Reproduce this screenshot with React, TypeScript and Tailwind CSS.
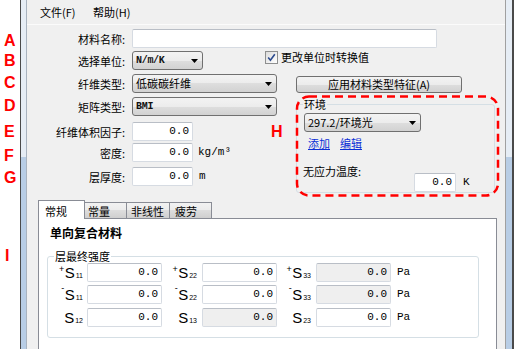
import React from "react";

function Arrow() {
  return (
    <svg width="7" height="4" viewBox="0 0 7 4" className="shrink-0">
      <polygon points="0,0 7,0 3.5,4" fill="#000" />
    </svg>
  );
}

function Combo({ w, text, mono }: { w: string; text: string; mono?: boolean }) {
  return (
    <div
      className={`${w} h-[19px] shrink-0 rounded-[3px] border border-[#707070] bg-[linear-gradient(#f3f3f3,#ececec_50%,#dedede_50%,#d2d2d2)] flex items-center justify-between pl-[3px] pr-[4px]`}
    >
      <span
        className={
          mono
            ? "font-['Liberation_Mono',monospace] font-bold text-[10px] leading-none tracking-[-0.3px] text-[#111]"
            : "text-[11px] leading-none"
        }
      >
        {text}
      </span>
      <Arrow />
    </div>
  );
}

function Field({ w, value, disabled }: { w: string; value?: string; disabled?: boolean }) {
  return (
    <div
      className={`${w} h-[19px] shrink-0 rounded-[2px] border border-[#d6dbe2] border-t-[#b9bec6] ${
        disabled ? "bg-[#efefef]" : "bg-white"
      } flex items-center justify-end pr-[3px]`}
    >
      {value ? (
        <span className="font-['Liberation_Mono',monospace] text-[11px] leading-none">{value}</span>
      ) : null}
    </div>
  );
}

function Label({ children }: { children: React.ReactNode }) {
  return <div className="w-[98px] mr-[7px] shrink-0 text-right text-[11px] leading-[14px]">{children}</div>;
}

function Unit({ children, cls }: { children: React.ReactNode; cls: string }) {
  return (
    <span className={`font-['Liberation_Mono',monospace] text-[11px] leading-none ${cls}`}>{children}</span>
  );
}

function SLabel({ sup, sub, w }: { sup?: string; sub: string; w: string }) {
  return (
    <div className={`${w} h-[19px] shrink-0 flex items-center justify-end font-['Liberation_Sans',Arial,sans-serif] pr-[1px]`}>
      {sup === "+" ? <span className="text-[9px] leading-[9px] self-start mt-[2px] mr-[0.5px]">+</span> : null}
      {sup === "-" ? <span className="text-[9px] leading-[9px] self-start -mt-[1px] mr-[0.5px]">-</span> : null}
      <span className="text-[15px] leading-none">S</span>
      <span className="text-[7px] leading-none self-end mb-[3px] ml-[1px]">{sub}</span>
    </div>
  );
}

function SRow({
  cells,
  className,
}: {
  cells: { sup?: string; sub: string; disabled?: boolean }[];
  className: string;
}) {
  return (
    <div className={`flex items-center h-[19px] ${className}`}>
      <SLabel sup={cells[0].sup} sub={cells[0].sub} w="w-[36px] mr-[3px]" />
      <Field w="w-[75px]" value="0.0" disabled={cells[0].disabled} />
      <SLabel sup={cells[1].sup} sub={cells[1].sub} w="w-[36px] mr-[4px]" />
      <Field w="w-[75px]" value="0.0" disabled={cells[1].disabled} />
      <SLabel sup={cells[2].sup} sub={cells[2].sub} w="w-[35px] mr-[4px]" />
      <Field w="w-[75px]" value="0.0" disabled={cells[2].disabled} />
      <Unit cls="ml-[6px]">Pa</Unit>
    </div>
  );
}

function Mark({ ch, cls }: { ch: string; cls: string }) {
  return (
    <div
      className={`absolute ${cls} text-[16px] leading-none font-bold text-[#ff0000] font-['Liberation_Sans',Arial,sans-serif]`}
    >
      {ch}
    </div>
  );
}

export default function App() {
  return (
    <div className="relative w-[517px] h-[349px] overflow-hidden bg-white flex text-black font-['Noto_Sans_CJK_SC','Noto_Sans',sans-serif]">
      {/* annotation gutter */}
      <div className="w-[20px] shrink-0 bg-white" />
      {/* left frame */}
      <div className="w-[1px] shrink-0 bg-[#4a4a4a]" />
      <div className="w-[5px] shrink-0 flex flex-col">
        <div className="h-[157px] bg-[#e6edf5]" />
        <div className="flex-1 bg-[#b8cde5]" />
      </div>
      <div className="w-[1px] shrink-0 bg-[#a9b3bf]" />

      {/* window */}
      <div className="w-[478px] shrink-0 bg-[#f0f0f0] flex flex-col text-[11px]">
        {/* menu */}
        <div className="h-[25px] shrink-0 border-b border-[#fbfbfb] flex items-center">
          <span className="ml-[13px] w-[53px] leading-[14px]">文件(F)</span>
          <span className="leading-[14px]">帮助(H)</span>
        </div>

        {/* row A */}
        <div className="mt-[4px] h-[19px] flex items-center shrink-0">
          <Label>材料名称:</Label>
          <Field w="w-[305px]" />
        </div>

        {/* row B */}
        <div className="mt-[3px] h-[19px] flex items-start shrink-0">
          <div className="h-[19px] flex items-center">
            <Label>选择单位:</Label>
          </div>
          <Combo w="w-[71px]" text="N/m/K" mono />
          <div className="ml-[62px] flex items-center">
            <div className="w-[13px] h-[13px] border border-[#8e8f8f] bg-[linear-gradient(135deg,#dcdcdc,#ffffff)] flex items-center justify-center">
              <svg width="11" height="11" viewBox="0 0 11 11">
                <path d="M2.2 5.6 L4.4 8.2 L8.8 2.2" fill="none" stroke="#2b4a8e" strokeWidth="1.6" />
              </svg>
            </div>
            <span className="ml-[3px] leading-[13px]">更改单位时转换值</span>
          </div>
        </div>

        {/* middle */}
        <div className="h-[130px] flex shrink-0">
          <div className="w-[269px] shrink-0 flex flex-col">
            <div className="mt-[4px] h-[19px] flex items-center">
              <Label>纤维类型:</Label>
              <Combo w="w-[145px]" text="低碳碳纤维" />
            </div>
            <div className="mt-[4px] h-[19px] flex items-center">
              <Label>矩阵类型:</Label>
              <Combo w="w-[145px]" text="BMI" mono />
            </div>
            <div className="mt-[6px] h-[19px] flex items-center">
              <Label>纤维体积因子:</Label>
              <Field w="w-[61px]" value="0.0" />
            </div>
            <div className="mt-[2px] h-[19px] flex items-center">
              <Label>密度:</Label>
              <Field w="w-[61px]" value="0.0" />
              <Unit cls="ml-[5px]">kg/m³</Unit>
            </div>
            <div className="mt-[5px] h-[19px] flex items-center">
              <Label>层厚度:</Label>
              <Field w="w-[61px]" value="0.0" />
              <Unit cls="ml-[6px]">m</Unit>
            </div>
          </div>

          <div className="flex flex-col">
            <div className="mt-[6px] w-[166px] h-[17px] rounded-[3px] border border-[#707070] bg-[linear-gradient(#f3f3f3,#ececec_50%,#dedede_50%,#d2d2d2)] flex items-center justify-center">
              <span className="leading-none">应用材料类型特征(A)</span>
            </div>
            <fieldset className="mt-[4px] m-0 p-0 w-[199px] min-w-0 rounded-[3px] border border-[#d5dfe5]">
              <legend className="ml-[6px] px-[1px] leading-[14px] text-[11px]">环境</legend>
              <div className="mt-[2px] ml-[7px]">
                <Combo w="w-[117px]" text="297.2/环境光" />
              </div>
              <div className="mt-[4px] ml-[11px] flex h-[14px] items-center">
                <span className="text-[#0b2fd6] underline leading-[14px]">添加</span>
                <span className="ml-[10px] text-[#0b2fd6] underline leading-[14px]">编辑</span>
              </div>
              <div className="mt-[14px] ml-[6px] flex items-start">
                <span className="w-[111px] leading-[14px]">无应力温度:</span>
                <div className="mt-[9px] flex items-center">
                  <Field w="w-[42px]" value="0.0" />
                  <Unit cls="ml-[7px]">K</Unit>
                </div>
              </div>
            </fieldset>
          </div>
        </div>

        {/* tabs */}
        <div className="ml-[11px] w-[459px] flex flex-col">
          <div className="h-[18px] flex items-end">
            <div className="relative z-10 w-[47px] h-[19px] -mb-[1px] bg-white border border-b-0 border-[#898c95] pl-[6px] pt-[3px] leading-[14px]">
              常规
            </div>
            <div className="w-[42px] h-[16px] border-t border-r border-[#898c95] bg-[linear-gradient(#f2f2f2,#ebebeb_50%,#dddddd_50%,#cfcfcf)] pl-[3px] pt-[1px] leading-[14px]">
              常量
            </div>
            <div className="w-[43px] h-[16px] border-t border-r border-[#898c95] bg-[linear-gradient(#f2f2f2,#ebebeb_50%,#dddddd_50%,#cfcfcf)] pl-[4px] pt-[1px] leading-[14px]">
              非线性
            </div>
            <div className="w-[42px] h-[16px] border-t border-r border-[#898c95] bg-[linear-gradient(#f2f2f2,#ebebeb_50%,#dddddd_50%,#cfcfcf)] pl-[5px] pt-[1px] leading-[14px]">
              疲劳
            </div>
          </div>
          <div className="h-[140px] bg-white border border-[#898c95] flex flex-col">
            <div className="mt-[7px] ml-[11px] text-[12px] font-bold leading-[14px]">单向复合材料</div>
            <fieldset className="mt-[10px] ml-[8px] m-0 p-0 w-[432px] min-w-0 rounded-[3px] border border-[#d5dfe5]">
              <legend className="ml-[6px] px-[1px] leading-[12px] text-[11px]">层最终强度</legend>
              <SRow
                className="mt-[1px]"
                cells={[
                  { sup: "+", sub: "11" },
                  { sup: "+", sub: "22" },
                  { sup: "+", sub: "33", disabled: true },
                ]}
              />
              <SRow
                className="mt-[3px]"
                cells={[
                  { sup: "-", sub: "11" },
                  { sup: "-", sub: "22" },
                  { sup: "-", sub: "33", disabled: true },
                ]}
              />
              <SRow
                className="mt-[4px] mb-[10px]"
                cells={[{ sub: "12" }, { sub: "13", disabled: true }, { sub: "23" }]}
              />
            </fieldset>
          </div>
        </div>
      </div>

      {/* right frame */}
      <div className="w-[1px] shrink-0 bg-[#a0a0a0]" />
      <div className="w-[6px] shrink-0 flex flex-col">
        <div className="h-[157px] bg-[#e6edf5]" />
        <div className="flex-1 bg-[#b8cde5]" />
      </div>
      <div className="w-[2px] shrink-0 bg-[#4a4a4a]" />
      <div className="flex-1 bg-white" />

      {/* annotations */}
      <Mark ch="A" cls="left-[4px] top-[33px]" />
      <Mark ch="B" cls="left-[4px] top-[53px]" />
      <Mark ch="C" cls="left-[4px] top-[75px]" />
      <Mark ch="D" cls="left-[4px] top-[98px]" />
      <Mark ch="E" cls="left-[4px] top-[124px]" />
      <Mark ch="F" cls="left-[4px] top-[148px]" />
      <Mark ch="G" cls="left-[4px] top-[170px]" />
      <Mark ch="H" cls="left-[271px] top-[124px]" />
      <Mark ch="I" cls="left-[5px] top-[248px]" />
      <svg className="absolute left-[290px] top-[89px]" width="215" height="113" viewBox="0 0 215 113">
        <rect x="7" y="7.5" width="201" height="99" rx="12" fill="none" stroke="#ff0000" strokeWidth="2.5" strokeDasharray="8 5" />
      </svg>
    </div>
  );
}
